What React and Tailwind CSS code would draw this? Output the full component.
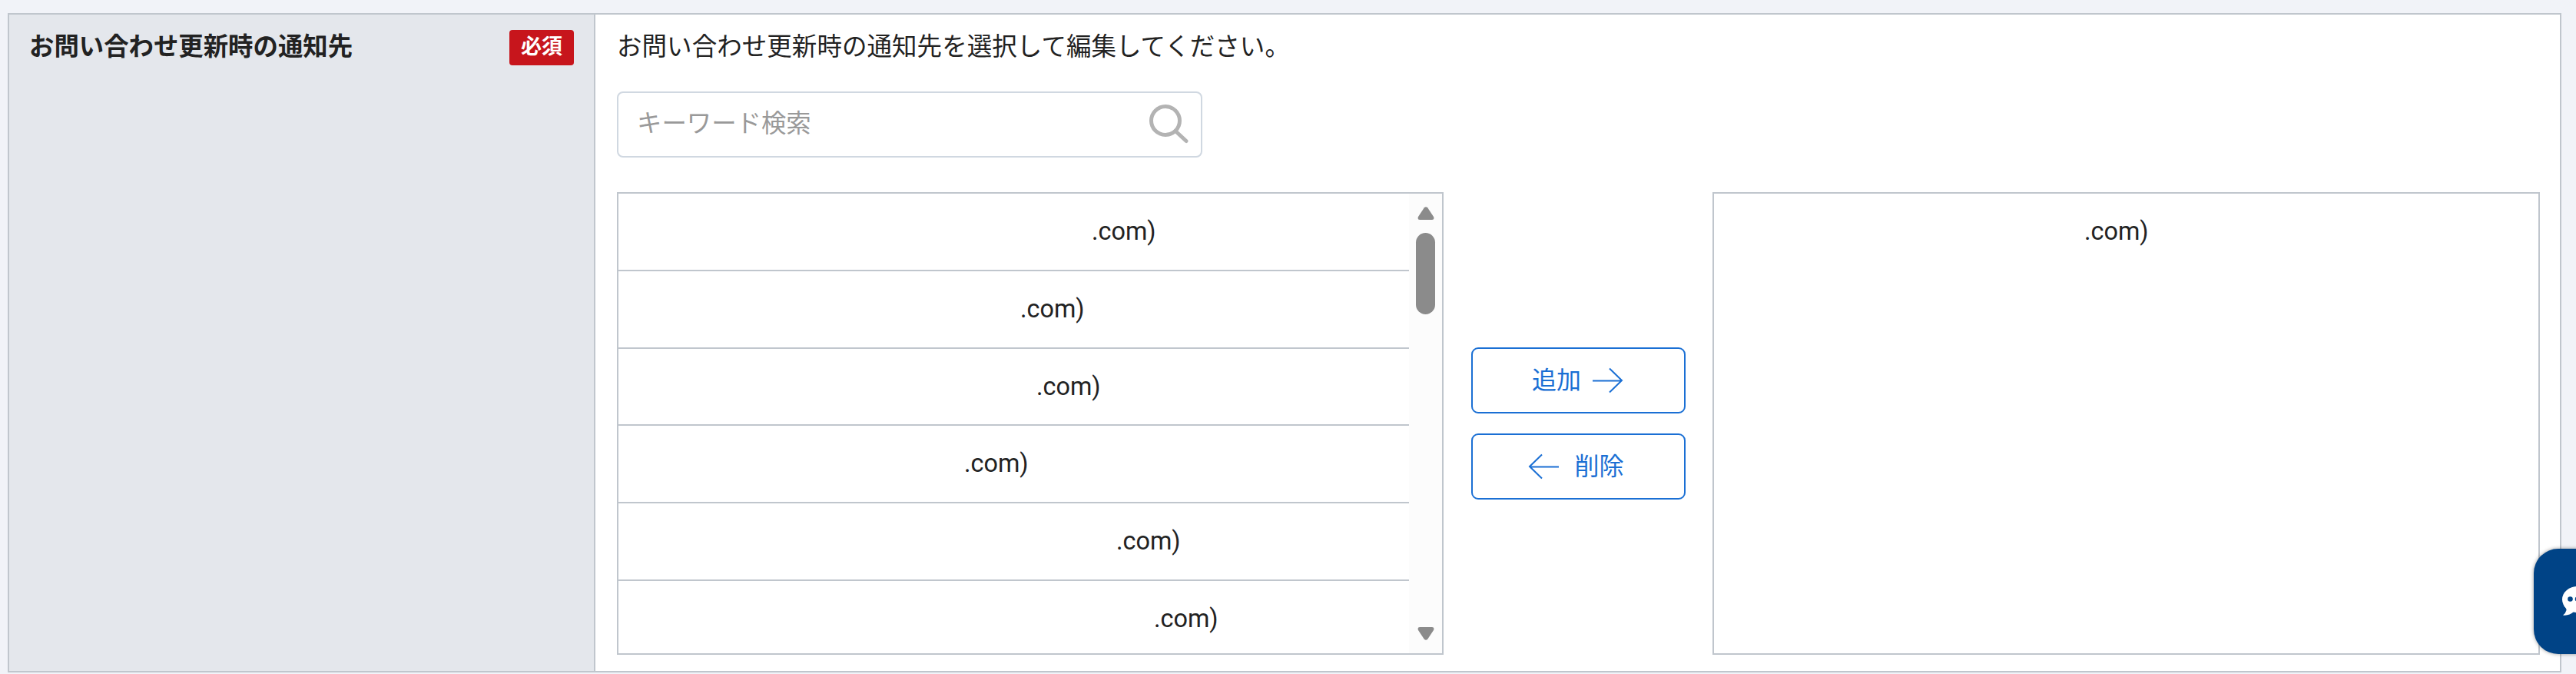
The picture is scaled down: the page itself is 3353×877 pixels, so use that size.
// left offset of each masked address inside the list
const candidates = [
  { id: 1, pad: 'pl-[616px]' },
  { id: 2, pad: 'pl-[523px]' },
  { id: 3, pad: 'pl-[544px]' },
  { id: 4, pad: 'pl-[450px]' },
  { id: 5, pad: 'pl-[648px]' },
  { id: 6, pad: 'pl-[697px]' },
]

const selected = [{ id: 7, pad: 'pl-[482px]' }]

function SearchBox() {
  return (
    <div className="mt-[38px] flex h-[86px] w-[762px] items-center justify-between rounded-[8px] border-2 border-[#d0d8e1] bg-white pb-[2px] pl-[24px] pr-[15px]">
      <span className="text-[32.4px] leading-[40px] text-[#999]">キーワード検索</span>
      <svg className="h-[52px] w-[52px]" viewBox="0 0 52 52" fill="none" stroke="#b3b3b3" strokeWidth="5">
        <circle cx="21" cy="22" r="18.5" />
        <path d="M34 35.500L48 48.500" strokeLinecap="round" />
      </svg>
    </div>
  )
}

function ScrollBar() {
  return (
    <div className="flex w-[43px] shrink-0 flex-col items-center bg-[#fcfcfc] pt-[17px] pb-[17px]">
      <svg className="h-[17px] w-[22px]" viewBox="0 0 22 17" fill="#8b8b8b">
        <path d="M8.800 1.300Q11 -1 13.200 1.300L21 13Q22.500 17 19 17H3Q-.5 17 1 13Z" />
      </svg>
      <div className="mt-[17px] h-[106px] w-[25px] rounded-full bg-[#8b8b8b]" />
      <svg className="mt-auto h-[17px] w-[22px]" viewBox="0 0 22 17" fill="#8b8b8b">
        <path d="M8.800 15.700Q11 18 13.200 15.700L21 4Q22.500 0 19 0H3Q-.5 0 1 4Z" />
      </svg>
    </div>
  )
}

function Arrow({ left }) {
  return (
    <svg className="h-[34px] w-[40px]" viewBox="0 0 40 34" fill="none" stroke="#1a6fd4" strokeWidth="2">
      {left ? <path d="M40 17.500H2M18 1.500L2 17L18 32.500" /> : <path d="M0 17.500H38M22 1.500L38 17L22 32.500" />}
    </svg>
  )
}

function ChatIcon() {
  return (
    <svg className="h-[44px] w-[44px]" viewBox="0 0 44 44">
      <ellipse cx="20" cy="19" rx="20" ry="17" fill="#fff" />
      <path d="M2 27Q6 31 5.500 33Q4.500 37 1 39.500Q9 40.500 15 35L22 30Z" fill="#fff" />
      <g fill="#004386">
        <circle cx="10.500" cy="18.500" r="3.300" />
        <circle cx="20" cy="18.500" r="3.300" />
        <circle cx="29.500" cy="18.500" r="3.300" />
      </g>
    </svg>
  )
}

export default function App() {
  return (
    <div className="relative h-[877px] w-[3353px] overflow-hidden bg-[#f1f3f8] pl-[10px] pt-[17px] font-['Roboto','Noto_Sans_CJK_JP',sans-serif] text-[#222]">
      <div className="flex h-[858px] w-[3324px] border-2 border-[#c0c6cd] bg-white">
        <div className="flex w-[763px] shrink-0 items-start justify-between border-r-2 border-[#c0c6cd] bg-[#e4e7ec] pl-[26px] pr-[26px] pt-[20px]">
          <span className="pt-[2px] text-[32.4px] font-bold leading-[40px]">お問い合わせ更新時の通知先</span>
          <span className="flex h-[46px] w-[84px] items-center justify-center rounded-[4px] bg-[#c7151c] pb-[2px] text-[27px] font-bold leading-none text-white">必須</span>
        </div>

        <div className="pl-[28px] pt-[22px]">
          <p className="text-[32.5px] leading-[40px] tracking-[0.05px]">お問い合わせ更新時の通知先を選択して編集してください。</p>
          <SearchBox />
          <div className="mt-[45px] flex">
            <div className="flex h-[602px] w-[1076px] overflow-hidden border-2 border-[#c0c6cd]">
              <ul className="flex-1">
                {candidates.map((c) => (
                  <li key={c.id} className={`flex h-[100.8px] items-center border-b-2 border-[#c0c6cd] text-[32.4px] ${c.pad}`}>
                    .com)
                  </li>
                ))}
              </ul>
              <ScrollBar />
            </div>

            <div className="ml-[36px] flex w-[279px] flex-col gap-[26px] pt-[202px]">
              <button className="flex h-[86px] items-center justify-center gap-[15px] rounded-[9px] border-2 border-[#1a6fd4] pr-[2px] text-[32px] text-[#1a6fd4]">
                追加
                <Arrow />
              </button>
              <button className="flex h-[86px] items-center justify-center gap-[20px] rounded-[9px] border-2 border-[#1a6fd4] pr-[6px] text-[32px] text-[#1a6fd4]">
                <Arrow left />
                削除
              </button>
            </div>

            <ul className="ml-[35px] h-[602px] w-[1077px] border-2 border-[#c0c6cd]">
              {selected.map((c) => (
                <li key={c.id} className={`flex h-[98px] items-center text-[32.4px] ${c.pad}`}>
                  .com)
                </li>
              ))}
            </ul>
          </div>
        </div>
      </div>

      {/* chat launcher, partly off screen */}
      <button className="absolute left-[3298px] top-[714px] flex h-[137px] w-[137px] items-center rounded-[32px] bg-[#004386] pl-[37px] text-white shadow-[0_0_5px_rgba(0,0,0,0.4)]">
        <ChatIcon />
      </button>
    </div>
  )
}
